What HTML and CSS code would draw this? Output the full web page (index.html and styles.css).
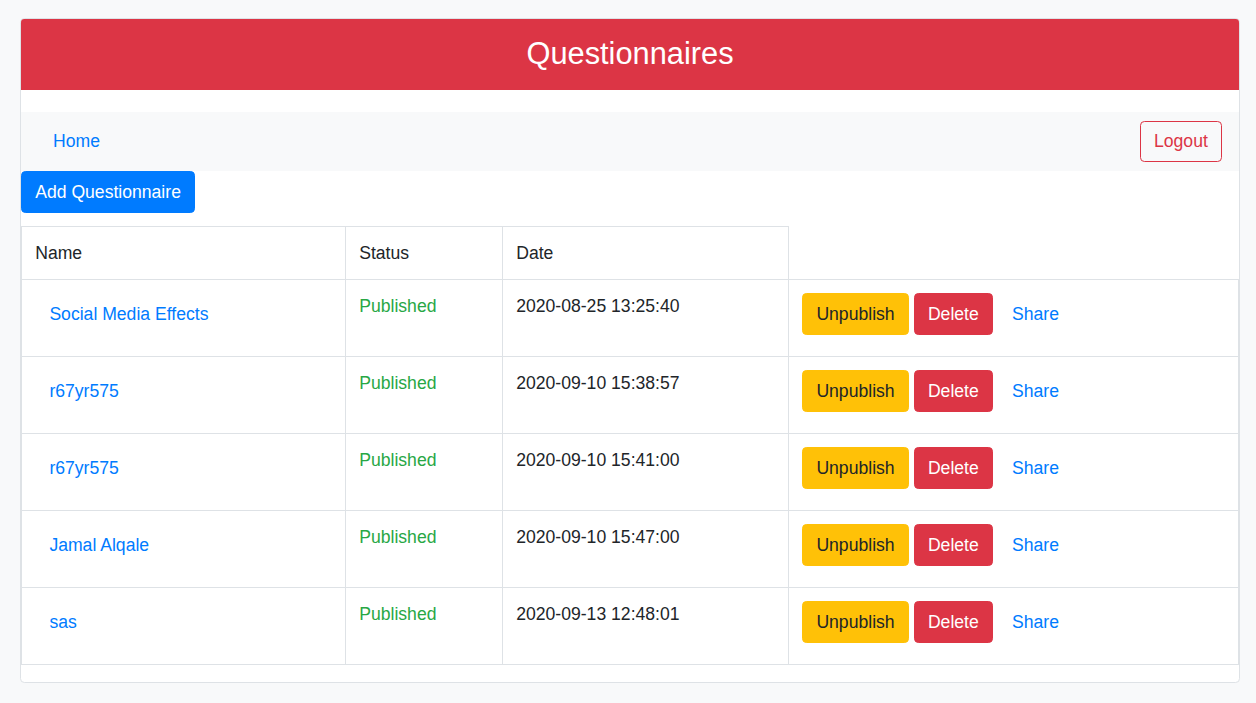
FILE: index.html
```html
<!DOCTYPE html>
<html>
<head>
<meta charset="utf-8">
<title>Questionnaires</title>
<link rel="stylesheet" href="styles.css">
</head>
<body>
<div class="card">
  <header class="title-bar"><h3 class="title">Questionnaires</h3></header>
  <nav class="navbar">
    <a class="nav-link" href="#">Home</a>
    <button class="btn btn-outline-danger">Logout</button>
  </nav>
  <div class="toolbar"><button class="btn btn-primary">Add Questionnaire</button></div>
  <table class="qtable">
    <colgroup><col class="c1"><col class="c2"><col class="c3"><col class="c4"></colgroup>
    <thead>
      <tr><th>Name</th><th>Status</th><th>Date</th></tr>
    </thead>
    <tbody>
      <tr>
        <td><a class="btn btn-link" href="#">Social Media Effects</a></td>
        <td class="status">Published</td>
        <td>2020-08-25 13:25:40</td>
        <td><button class="btn btn-warning">Unpublish</button> <button class="btn btn-danger">Delete</button> <a class="btn btn-link" href="#">Share</a></td>
      </tr>
      <tr>
        <td><a class="btn btn-link" href="#">r67yr575</a></td>
        <td class="status">Published</td>
        <td>2020-09-10 15:38:57</td>
        <td><button class="btn btn-warning">Unpublish</button> <button class="btn btn-danger">Delete</button> <a class="btn btn-link" href="#">Share</a></td>
      </tr>
      <tr>
        <td><a class="btn btn-link" href="#">r67yr575</a></td>
        <td class="status">Published</td>
        <td>2020-09-10 15:41:00</td>
        <td><button class="btn btn-warning">Unpublish</button> <button class="btn btn-danger">Delete</button> <a class="btn btn-link" href="#">Share</a></td>
      </tr>
      <tr>
        <td><a class="btn btn-link" href="#">Jamal Alqale</a></td>
        <td class="status">Published</td>
        <td>2020-09-10 15:47:00</td>
        <td><button class="btn btn-warning">Unpublish</button> <button class="btn btn-danger">Delete</button> <a class="btn btn-link" href="#">Share</a></td>
      </tr>
      <tr>
        <td><a class="btn btn-link" href="#">sas</a></td>
        <td class="status">Published</td>
        <td>2020-09-13 12:48:01</td>
        <td><button class="btn btn-warning">Unpublish</button> <button class="btn btn-danger">Delete</button> <a class="btn btn-link" href="#">Share</a></td>
      </tr>
    </tbody>
  </table>
</div>
</body>
</html>
```
FILE: styles.css
```css
html, body {
  margin: 0;
  padding: 0;
}
body {
  background: #f8f9fa;
  font-family: "Liberation Sans", Arial, sans-serif;
  font-size: 17.6px;
  line-height: 26.4px;
  color: #212529;
  padding: 18px 16px 21px 20px;
}
.card {
  background: #fff;
  border: 1px solid #dee2e6;
  border-radius: 4.4px;
  padding-bottom: 17px;
  overflow: hidden;
}
.title-bar {
  background: #dc3545;
  height: 71px;
  display: flex;
  align-items: center;
  justify-content: center;
}
.title {
  margin: 0 0 2px;
  color: #fff;
  font-size: 30.8px;
  font-weight: 400;
  line-height: 37px;
}
.navbar {
  margin-top: 22px;
  background: #f8f9fa;
  height: 59px;
  display: flex;
  align-items: center;
  justify-content: space-between;
  padding: 0 17px 0 32px;
  box-sizing: border-box;
}
.nav-link {
  color: #007bff;
  text-decoration: none;
}
.btn {
  display: inline-block;
  font-family: inherit;
  font-size: 17.6px;
  line-height: 26.4px;
  padding: 6.6px 13.2px;
  border: 1px solid transparent;
  border-radius: 4.4px;
  background: transparent;
  vertical-align: middle;
  text-decoration: none;
  cursor: pointer;
  margin: 0;
}
.btn-outline-danger {
  color: #dc3545;
  border-color: #dc3545;
}
.btn-primary {
  background: #007bff;
  border-color: #007bff;
  color: #fff;
}
.btn-warning {
  background: #ffc107;
  border-color: #ffc107;
  color: #212529;
}
.btn-danger {
  background: #dc3545;
  border-color: #dc3545;
  color: #fff;
}
.btn-link {
  color: #007bff;
}
.toolbar {
  margin-bottom: 13.2px;
}
.qtable {
  width: 100%;
  border-collapse: collapse;
  table-layout: fixed;
}
.c1 { width: 324px; }
.c2 { width: 157px; }
.c3 { width: 286px; }
.qtable th,
.qtable td {
  border: 1px solid #dee2e6;
  padding: 13.2px;
  text-align: left;
  vertical-align: top;
  font-weight: 400;
}
.qtable th {
  padding-bottom: 12.4px;
}
.qtable tbody tr {
  height: 77px;
}
.status {
  color: #28a745;
}
```
